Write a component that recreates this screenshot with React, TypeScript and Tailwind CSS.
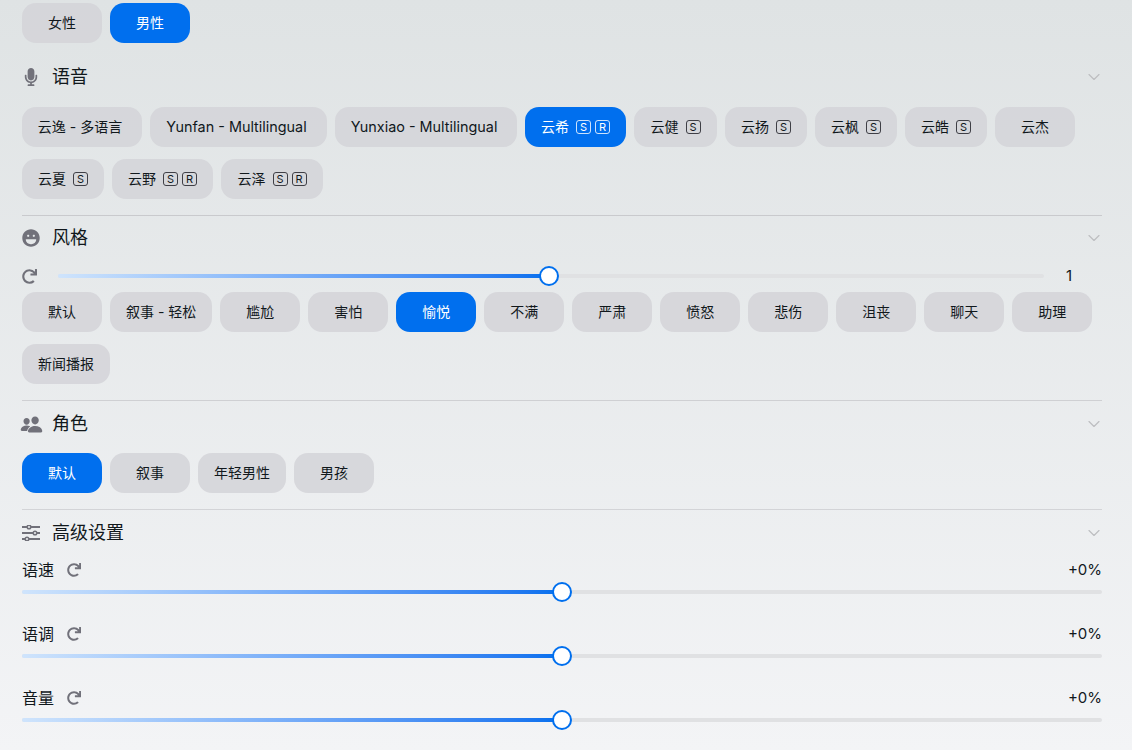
import { ChevronDown } from "lucide-react";
import { FaLaugh, FaMicrophone, FaRedo } from "react-icons/fa";
import { IoPeople } from "react-icons/io5";
import type { ReactNode } from "react";

type Voice = { name: string; tags?: string[]; active?: boolean; className?: string };

const voices: Voice[] = [
  { name: "云逸 - 多语言", className: "w-[120px] pr-5 text-sm" },
  { name: "Yunfan - Multilingual", className: "w-[177px] pr-5 text-[14.4px]" },
  { name: "Yunxiao - Multilingual", className: "w-[182px] pr-5 text-[14.4px]" },
  { name: "云希", tags: ["S", "R"], active: true },
  { name: "云健", tags: ["S"], className: "w-[83px] text-sm" },
  { name: "云扬", tags: ["S"] },
  { name: "云枫", tags: ["S"] },
  { name: "云皓", tags: ["S"] },
  { name: "云杰" },
  { name: "云夏", tags: ["S"] },
  { name: "云野", tags: ["S", "R"] },
  { name: "云泽", tags: ["S", "R"], className: "w-[102px] text-sm" },
];

const styles = ["默认", "叙事 - 轻松", "尴尬", "害怕", "愉悦", "不满", "严肃", "愤怒", "悲伤", "沮丧", "聊天", "助理", "新闻播报"];
const roles = ["默认", "叙事", "年轻男性", "男孩"];

function Chip({ active, className = "text-sm", children }: { active?: boolean; className?: string; children: ReactNode }) {
  return (
    <button
      className={`h-10 min-w-20 px-4 rounded-[14px] flex items-center justify-center gap-[7px] whitespace-nowrap ${className} ${
        active ? "bg-[#006fee] text-white" : "bg-[#d4d4d8]/85 text-[#11181c]"
      }`}
    >
      {children}
    </button>
  );
}

function Tag({ label, active }: { label: string; active?: boolean }) {
  return (
    <span
      className={`w-[15px] h-[14px] rounded-[3px] border flex items-center justify-center text-[11px] leading-none ${
        active ? "border-white/80" : "border-[#3f3f46]"
      }`}
    >
      {label}
    </span>
  );
}

function SlidersIcon() {
  return (
    <svg width="18" height="16" viewBox="0 0 18 16" fill="none" stroke="currentColor" strokeWidth="2">
      <path d="M0 2h18M0 8h18M0 14h18" />
      <circle cx="7" cy="2" r="1.8" fill="#e8eaec" strokeWidth="1.5" />
      <circle cx="13" cy="8" r="1.8" fill="#e8eaec" strokeWidth="1.5" />
      <circle cx="5" cy="14" r="1.8" fill="#e8eaec" strokeWidth="1.5" />
    </svg>
  );
}

function Heading({ icon, title, className }: { icon: ReactNode; title: string; className: string }) {
  return (
    <div className={`h-7 flex items-center ${className}`}>
      <div className="w-[18px] flex justify-center text-[#71717a]">{icon}</div>
      <span className="ml-3 text-lg text-[#11181c]">{title}</span>
      <ChevronDown className="ml-auto -mr-[2px] text-[#bdbec1]" size={20} strokeWidth={1.4} />
    </div>
  );
}

function Track({ fill = "w-1/2", thumb = "left-1/2" }: { fill?: string; thumb?: string }) {
  return (
    <div className="relative flex-1 h-5 flex items-center">
      <div className="w-full h-1 rounded-full bg-[#e0e1e3]">
        <div className={`${fill} h-full rounded-full bg-gradient-to-r from-[#cfe4fc] to-[#006fee]`} />
      </div>
      <div className={`absolute ${thumb} -ml-[10px] w-5 h-5 rounded-full bg-white border-2 border-[#006fee]`} />
    </div>
  );
}

function Adjust({ label }: { label: string }) {
  return (
    <div>
      <div className="h-6 flex items-center justify-between text-[#11181c]">
        <div className="flex items-center gap-[13px] text-base">
          {label}
          <FaRedo className="text-[#71717a]" size={14} />
        </div>
        <span className="text-[15px]">+0%</span>
      </div>
      <Track />
    </div>
  );
}

export default function App() {
  return (
    <div
      className="h-[750px] overflow-hidden pl-[22px] pr-[30px] pt-[3px] bg-gradient-to-b from-[#dfe3e4] to-[#f3f4f6]"
      style={{ fontFamily: 'Inter, "Noto Sans CJK SC", sans-serif' }}
    >
      <div className="flex gap-2">
        <Chip>女性</Chip>
        <Chip active>男性</Chip>
      </div>

      <Heading className="mt-5 mb-4" icon={<FaMicrophone size={18} />} title="语音" />
      <div className="flex flex-wrap gap-x-2 gap-y-3">
        {voices.map((v) => (
          <Chip key={v.name} active={v.active} className={v.className}>
            {v.name}
            {v.tags && (
              <span className="flex gap-1">
                {v.tags.map((t) => (
                  <Tag key={t} label={t} active={v.active} />
                ))}
              </span>
            )}
          </Chip>
        ))}
      </div>

      <div className="mt-4 border-t border-[#c9cacd]" />
      <Heading className="mt-2" icon={<FaLaugh size={18} />} title="风格" />
      <div className="mt-[14px] flex items-center">
        <FaRedo className="text-[#71717a]" size={15} />
        <div className="ml-[21px] flex-1 flex items-center">
          <Track fill="w-[49.8%]" thumb="left-[49.8%]" />
          <span className="w-[58px] pl-[22px] text-[15px] leading-5 text-[#11181c]">1</span>
        </div>
      </div>
      <div className="mt-[6px] flex flex-wrap gap-x-2 gap-y-3">
        {styles.map((s) => (
          <Chip key={s} active={s === "愉悦"}>
            {s}
          </Chip>
        ))}
      </div>

      <div className="mt-4 border-t border-[#cfd0d3]" />
      <Heading className="mt-[9px] mb-[15px]" icon={<IoPeople className="shrink-0" size={23} />} title="角色" />
      <div className="flex gap-2">
        {roles.map((r) => (
          <Chip key={r} active={r === "默认"}>
            {r}
          </Chip>
        ))}
      </div>

      <div className="mt-4 border-t border-[#d3d4d7]" />
      <Heading className="mt-[9px] mb-[11px]" icon={<SlidersIcon />} title="高级设置" />
      <div className="flex flex-col gap-5">
        <Adjust label="语速" />
        <Adjust label="语调" />
        <Adjust label="音量" />
      </div>
    </div>
  );
}
